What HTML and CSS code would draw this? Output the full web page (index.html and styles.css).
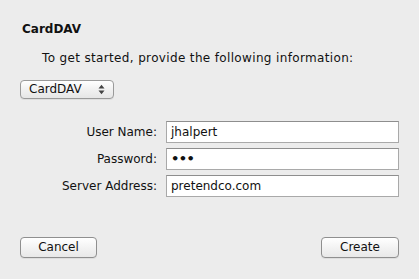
FILE: index.html
```html
<!DOCTYPE html>
<html>
<head>
<meta charset="utf-8">
<link rel="stylesheet" href="styles.css">
</head>
<body>
<div class="dialog">
  <div class="title">CardDAV</div>
  <div class="intro">To get started, provide the following information:</div>
  <div class="popup">
    <span class="popup-label">CardDAV</span>
    <svg class="arrows" width="7" height="11" viewBox="0 0 7 11"><path d="M0.5 4.5 L3.5 0.8 L6.5 4.5 Z M0.5 6.5 L3.5 10.2 L6.5 6.5 Z" fill="#444"/></svg>
  </div>
  <div class="fields">
    <label class="label">User Name:</label>
    <div class="input">jhalpert</div>
    <label class="label">Password:</label>
    <div class="input dots">&bull;&bull;&bull;</div>
    <label class="label">Server Address:</label>
    <div class="input">pretendco.com</div>
  </div>
  <div class="buttons">
    <div class="btn btn-cancel">Cancel</div>
    <div class="btn btn-create">Create</div>
  </div>
</div>
</body>
</html>
```
FILE: styles.css
```css
html, body {
  margin: 0;
  padding: 0;
  background: #ececec;
}
body {
  font-family: "DejaVu Sans", "Lucida Grande", sans-serif;
  font-size: 12px;
  color: #111;
  width: 419px;
  height: 279px;
  overflow: hidden;
}
.dialog {
  padding: 22px 20px 0 20px;
  display: flex;
  flex-direction: column;
}
.title {
  font-weight: bold;
  padding-left: 2px;
  height: 15px;
  line-height: 15px;
}
.intro {
  margin-top: 14px;
  padding-left: 22px;
  height: 15px;
  line-height: 15px;
  letter-spacing: 0.35px;
}
.popup {
  margin-top: 14px;
  height: 17px;
  box-sizing: content-box;
  border: 1px solid #9a9a9a;
  border-radius: 4px;
  background: linear-gradient(#ffffff, #f1f1f1 50%, #e6e6e6);
  display: flex;
  align-items: center;
  justify-content: space-between;
  padding: 0 8px 0 8px;
  width: 76px;
  box-shadow: 0 1px 0 rgba(0,0,0,0.06);
}
.popup-label {
  line-height: 17px;
}
.arrows {
  display: block;
}
.fields {
  margin-top: 22px;
  display: grid;
  grid-template-columns: 137px 233px;
  column-gap: 9px;
  row-gap: 5px;
}
.label {
  text-align: right;
  line-height: 22px;
  height: 22px;
}
.input {
  height: 22px;
  box-sizing: border-box;
  border: 1px solid #a9a9a9;
  border-top-color: #8e8e8e;
  background: #fff;
  padding-left: 4px;
  line-height: 20px;
}
.dots {
  font-size: 13px;
  font-weight: bold;
  letter-spacing: -0.5px;
}
.buttons {
  margin-top: 40px;
  display: flex;
  justify-content: space-between;
}
.btn {
  height: 21px;
  box-sizing: border-box;
  border: 1px solid #8f8f8f;
  border-radius: 4px;
  background: linear-gradient(#ffffff, #f3f3f3 50%, #e8e8e8);
  text-align: center;
  line-height: 19px;
  box-shadow: 0 1px 0 rgba(0,0,0,0.06);
}
.btn-cancel {
  width: 77px;
}
.btn-create {
  width: 78px;
}
```
